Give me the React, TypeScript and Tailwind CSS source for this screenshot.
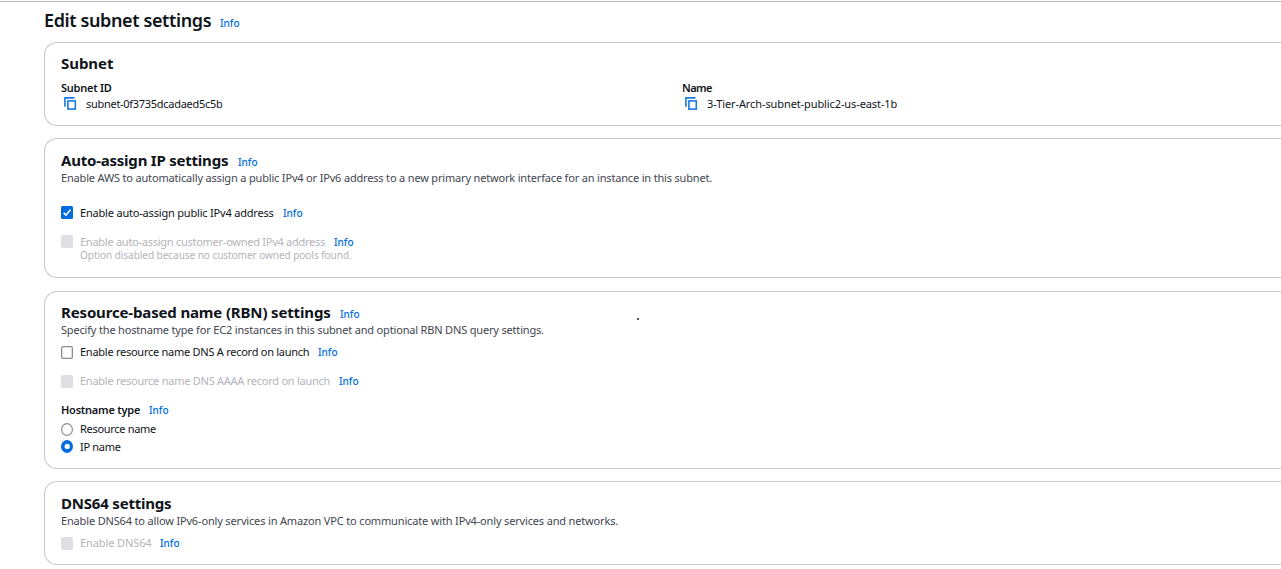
import type { ReactNode } from "react";

function Info() {
  return <a className="shrink-0 text-[10px] font-medium text-[#006ce0]">Info</a>;
}

function Card({ className, children }: { className: string; children: ReactNode }) {
  return (
    <section className={`rounded-l-[13px] border border-r-0 border-[#c6c6cd] bg-white pl-4 ${className}`}>
      {children}
    </section>
  );
}

function Heading({ className, info, children }: { className: string; info?: boolean; children: ReactNode }) {
  return (
    <div className="flex h-5 items-baseline leading-5">
      <h2 className={`shrink-0 text-[15px] font-bold ${className}`}>{children}</h2>
      {info && <Info />}
    </div>
  );
}

function Description({ className, children }: { className: string; children: ReactNode }) {
  return <p className={`h-4 text-[#424650] ${className}`}>{children}</p>;
}

type BoxState = "on" | "off" | "disabled";

function Box({ state, offset }: { state: BoxState; offset: string }) {
  if (state === "on") {
    return (
      <svg className={`mr-[7px] h-[13px] w-3 shrink-0 self-start ${offset}`} viewBox="0 0 12 13">
        <rect width="12" height="13" rx="1.5" fill="#006ce0" />
        <path d="M2.6 6.8 5 9.1 9.5 3.8" fill="none" stroke="#fff" strokeWidth="1.6" />
      </svg>
    );
  }
  if (state === "off") {
    return (
      <svg className={`mr-[7px] h-[13px] w-3 shrink-0 self-start ${offset}`} viewBox="0 0 12 13">
        <rect x=".65" y=".65" width="10.7" height="11.7" rx="1.4" fill="#fff" stroke="#8c8c94" strokeWidth="1.3" />
      </svg>
    );
  }
  return <span className={`mr-[7px] h-[13px] w-3 shrink-0 self-start rounded-[2px] bg-[#dedee3] ${offset}`} />;
}

interface CheckProps {
  state: BoxState;
  offset: string;
  text: string;
  className: string;
  children: ReactNode;
}

function Check({ state, offset, text, className, children }: CheckProps) {
  return (
    <label className={`flex h-4 items-baseline ${className}`}>
      <Box state={state} offset={offset} />
      <span className={`shrink-0 ${text} ${state === "disabled" ? "text-[#b4b4bb]" : ""}`}>{children}</span>
      <Info />
    </label>
  );
}

function Radio({ on, offset, className, label }: { on?: boolean; offset: string; className: string; label: string }) {
  return (
    <label className={`flex h-4 ${className}`}>
      <svg className={`mr-[7px] h-[13px] w-3 shrink-0 ${offset}`} viewBox="0 0 12 13">
        {on ? (
          <>
            <ellipse cx="6" cy="6.5" rx="6" ry="6.5" fill="#006ce0" />
            <circle cx="6.2" cy="6.4" r="2.6" fill="#fff" />
          </>
        ) : (
          <ellipse cx="6" cy="6.5" rx="5.4" ry="5.9" fill="#fff" stroke="#8c8c94" strokeWidth="1.2" />
        )}
      </svg>
      <span className="tracking-[-0.3px]">{label}</span>
    </label>
  );
}

function CopyIcon() {
  return (
    <svg className="mt-px mr-[9px] ml-[3px] h-[13px] w-[13px] shrink-0" viewBox="0 0 13 13" fill="none" stroke="#1a7ae6" strokeWidth="1.6">
      <path d="M.9 9.8V.9H10.5" />
      <rect x="3.9" y="3.9" width="7.4" height="8.2" />
    </svg>
  );
}

export default function App() {
  return (
    <main className="h-[569px] w-full overflow-hidden bg-white pl-11 font-['Noto_Sans','Open_Sans',sans-serif] text-[11px] leading-4 whitespace-nowrap text-[#0f141a]">
      <div className="-ml-11 h-2 pt-px">
        <div className="h-px bg-[#b4b4bb]" />
      </div>
      <header className="mb-[10px] flex h-6 items-baseline leading-6">
        <h1 className="w-[176px] text-[18px] font-semibold tracking-[-0.38px]">Edit subnet settings</h1>
        <Info />
      </header>

      <Card className="mb-3 h-[84px] pt-[10px]">
        <Heading className="tracking-[-0.05px]">Subnet</Heading>
        <div className="mt-[7px] flex">
          <div className="w-[621px]">
            <div className="font-semibold tracking-[-0.25px]">Subnet ID</div>
            <div className="flex h-4">
              <CopyIcon />
              <span className="tracking-[-0.29px]">subnet-0f3735dcadaed5c5b</span>
            </div>
          </div>
          <div>
            <div className="font-semibold tracking-[-0.55px]">Name</div>
            <div className="flex h-4">
              <CopyIcon />
              <span className="tracking-[-0.1px]">3-Tier-Arch-subnet-public2-us-east-1b</span>
            </div>
          </div>
        </div>
      </Card>

      <Card className="mb-[13px] h-[140px] pt-[11px]">
        <Heading className="w-[177px] tracking-[-0.22px]" info>Auto-assign IP settings</Heading>
        <Description className="tracking-[-0.175px]">
          Enable AWS to automatically assign a public IPv4 or IPv6 address to a new primary network interface for an instance in this subnet.
        </Description>
        <Check state="on" offset="mt-px" text="w-[203px] tracking-[-0.19px]" className="mt-[19px]">
          Enable auto-assign public IPv4 address
        </Check>
        <Check state="disabled" offset="mt-px" text="w-[254px] tracking-[-0.26px]" className="mt-[13px]">
          Enable auto-assign customer-owned IPv4 address
        </Check>
        <p className="-mt-[3px] pl-[19px] text-[10px] tracking-[-0.04px] text-[#b4b4bb]">
          Option disabled because no customer owned pools found.
        </p>
      </Card>

      <Card className="mb-3 h-[178px] pt-[10px]">
        <Heading className="w-[279px] tracking-[-0.15px]" info>Resource-based name (RBN) settings</Heading>
        <div className="flex">
          <Description className="w-[576px] tracking-[-0.175px]">
            Specify the hostname type for EC2 instances in this subnet and optional RBN DNS query settings.
          </Description>
          <span className="-mt-1 h-[2px] w-[2px] rounded-full bg-[#222]" />
        </div>
        <Check state="off" offset="mt-[2px]" text="w-[238px] tracking-[-0.26px]" className="mt-[6px]">
          Enable resource name DNS A record on launch
        </Check>
        <Check state="disabled" offset="mt-[2px]" text="w-[259px] tracking-[-0.25px]" className="mt-[13px]">
          Enable resource name DNS AAAA record on launch
        </Check>
        <div className="mt-[13px] flex h-4 items-baseline">
          <span className="w-[88px] font-semibold tracking-[-0.23px]">Hostname type</span>
          <Info />
        </div>
        <Radio offset="mt-[2px]" className="mt-[3px]" label="Resource name" />
        <Radio on offset="mt-px" className="mt-[2px]" label="IP name" />
      </Card>

      <Card className="h-[84px] pt-[11px]">
        <Heading className="tracking-[-0.2px]">DNS64 settings</Heading>
        <Description className="tracking-[-0.16px]">
          Enable DNS64 to allow IPv6-only services in Amazon VPC to communicate with IPv4-only services and networks.
        </Description>
        <Check state="disabled" offset="mt-[2px]" text="w-[80px] tracking-[-0.1px]" className="mt-[6px]">
          Enable DNS64
        </Check>
      </Card>
    </main>
  );
}
